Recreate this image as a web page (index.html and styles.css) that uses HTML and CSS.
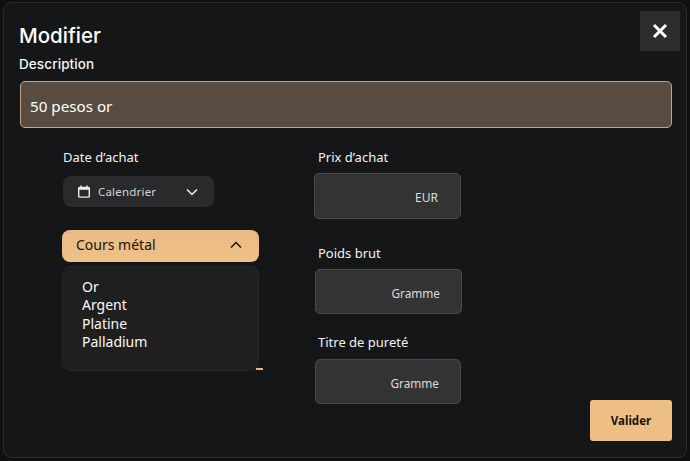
FILE: index.html
```html
<!DOCTYPE html>
<html lang="fr">
<head>
    <meta charset="UTF-8">
    <meta name="viewport" content="width=device-width, initial-scale=1.0">
    <title>Modifier</title>
    <link rel="stylesheet" href="styles.css">
</head>
<body>
    <div class="modal">
        <div class="modal-header">
            <h1>Modifier</h1>
            <button type="button" class="close-btn" aria-label="Fermer">
                <svg width="16" height="16" viewBox="0 0 16 16"><path d="M2 2l12 12M14 2L2 14" fill="none" stroke="#fff" stroke-width="3"/></svg>
            </button>
        </div>
        <label class="desc-label" for="desc">Description</label>
        <input class="desc-input" id="desc" type="text" value="50 pesos or">

        <div class="form-row">
            <div class="col-left">
                <div class="field-label date-label">Date d’achat</div>
                <button type="button" class="calendar-btn">
                    <svg class="cal-icon" width="12" height="13" viewBox="0 0 12 13"><path d="M1.5 2.5h9a.8.8 0 0 1 .8.8v8a.8.8 0 0 1-.8.8h-9a.8.8 0 0 1-.8-.8v-8a.8.8 0 0 1 .8-.8zM3 .6v2.6M9 .6v2.6" fill="none" stroke="#ececec" stroke-width="1.4"/><path d="M1 3h10v1.8H1z" fill="#ececec"/></svg>
                    <span>Calendrier</span>
                    <svg class="chevron" width="12" height="8" viewBox="0 0 12 8"><path d="M1 1.5l5 5 5-5" fill="none" stroke="#f0f0f0" stroke-width="1.5"/></svg>
                </button>
                <div class="metal-toggle">
                    <span>Cours métal</span>
                    <svg width="12" height="8" viewBox="0 0 12 8"><path d="M1 6.5l5-5 5 5" fill="none" stroke="#1a1408" stroke-width="1.5"/></svg>
                </div>
                <div class="metal-list">
                    <div>Or</div>
                    <div>Argent</div>
                    <div>Platine</div>
                    <div>Palladium</div>
                    <span class="list-tick"></span>
                </div>
            </div>

            <div class="col-right">
                <div class="field-label">Prix d’achat</div>
                <div class="unit-box"><span>EUR</span></div>
                <div class="field-label label-poids">Poids brut</div>
                <div class="unit-box box-shift box-poids"><span>Gramme</span></div>
                <div class="field-label label-titre">Titre de pureté</div>
                <div class="unit-box box-shift box-titre"><span>Gramme</span></div>
            </div>

            <button type="button" class="submit-btn">Valider</button>
        </div>
    </div>
</body>
</html>
```

FILE: styles.css
```css
* {
    margin: 0;
    padding: 0;
    box-sizing: border-box;
}

html, body {
    height: 100%;
}

body {
    background-color: #0f1012;
    font-family: "Noto Sans", "Open Sans", Arial, sans-serif;
    color: #fff;
    padding: 2px 3px 3px;
    overflow: hidden;
}

.modal {
    height: 456px;
    background: #151618;
    border: 1px solid #2b2d2d;
    border-radius: 9px;
    padding: 8px 14px 0 15px;
}

.modal-header {
    display: flex;
    justify-content: space-between;
    align-items: center;
    height: 40px;
    margin-right: -8px;
}

h1 {
    font-family: Inter, Roboto, Arial, sans-serif;
    font-size: 20.5px;
    font-weight: 500;
    line-height: 28px;
    margin: 10px 0 0 0;
}

.close-btn {
    width: 40px;
    height: 40px;
    background: #2c2d2e;
    border: none;
    display: flex;
    align-items: center;
    justify-content: center;
}

.desc-label {
    display: block;
    font-family: Inter, Roboto, Arial, sans-serif;
    font-size: 13.5px;
    font-weight: 500;
    letter-spacing: 0.1px;
    line-height: 18px;
    margin: 4px 0 0 0;
    color: #f4f4f4;
}

.desc-input {
    display: block;
    width: 652px;
    height: 47px;
    margin: 8px 0 0 1px;
    padding: 2px 9px 0;
    background: #574c3f;
    border: 1px solid #c4a77f;
    border-radius: 5px;
    font-family: "Noto Sans", Arial, sans-serif;
    font-size: 15.2px;
    color: #fff;
    outline: none;
}

.form-row {
    display: flex;
    align-items: flex-start;
    padding-left: 43px;
}

.col-left {
    width: 197px;
    padding-top: 20px;
}

.field-label {
    font-size: 13px;
    line-height: 18px;
    color: #f2f2f2;
}

.date-label {
    margin-left: 1px;
}

.calendar-btn {
    display: flex;
    align-items: center;
    width: 151px;
    height: 31px;
    margin: 10px 0 0 1px;
    padding: 0 16px 0 15px;
    background: #2a2a2c;
    border: none;
    border-radius: 8px;
    font-family: "Noto Sans", Arial, sans-serif;
    font-size: 11.5px;
    color: #d4d4d4;
    letter-spacing: 0.2px;
}

.cal-icon {
    margin-right: 8px;
}

.chevron {
    margin-left: auto;
}

.metal-toggle {
    display: flex;
    align-items: center;
    justify-content: space-between;
    height: 32px;
    margin-top: 23px;
    padding: 0 17px 3px 14px;
    background: linear-gradient(#e9bb84, #f0c088);
    border-radius: 8px;
    font-size: 14px;
    color: #1a1408;
}

.metal-list {
    position: relative;
    height: 105px;
    margin-top: 4px;
    padding: 11px 20px;
    background: #1f1f20;
    border: 1px solid #242526;
    border-radius: 8px;
    font-size: 14px;
    line-height: 18.4px;
    color: #fafafa;
}

.metal-list div {
    margin-left: -1px;
}

.list-tick {
    position: absolute;
    right: -5px;
    bottom: 0;
    width: 7px;
    height: 2px;
    background: #e3bb8b;
}

.col-right {
    width: 148px;
    margin-left: 55px;
    padding-top: 20px;
}

.col-right .field-label {
    margin-left: 4px;
}

.unit-box {
    display: flex;
    align-items: center;
    justify-content: flex-end;
    width: 147px;
    height: 46px;
    margin-top: 7px;
    padding: 3px 22px 0 0;
    background: #333334;
    border: 1px solid #4a4a4b;
    border-radius: 5px;
    font-size: 12px;
    color: #dcdcdc;
}

.box-shift {
    margin-left: 1px;
    width: 146px;
    padding-right: 21px;
    font-size: 11.8px;
}

.box-poids {
    width: 147px;
    height: 45px;
}

.box-titre {
    height: 45px;
    margin-top: 8px;
}

.label-poids {
    margin-top: 25px;
}

.label-titre {
    margin-top: 19px;
}

.submit-btn {
    width: 82px;
    height: 41px;
    margin: 272px 0 0 auto;
    background: #eebf85;
    border: none;
    border-radius: 3px;
    font-family: "Noto Sans", Arial, sans-serif;
    font-size: 11.5px;
    font-weight: 700;
    color: #17130b;
}
```
